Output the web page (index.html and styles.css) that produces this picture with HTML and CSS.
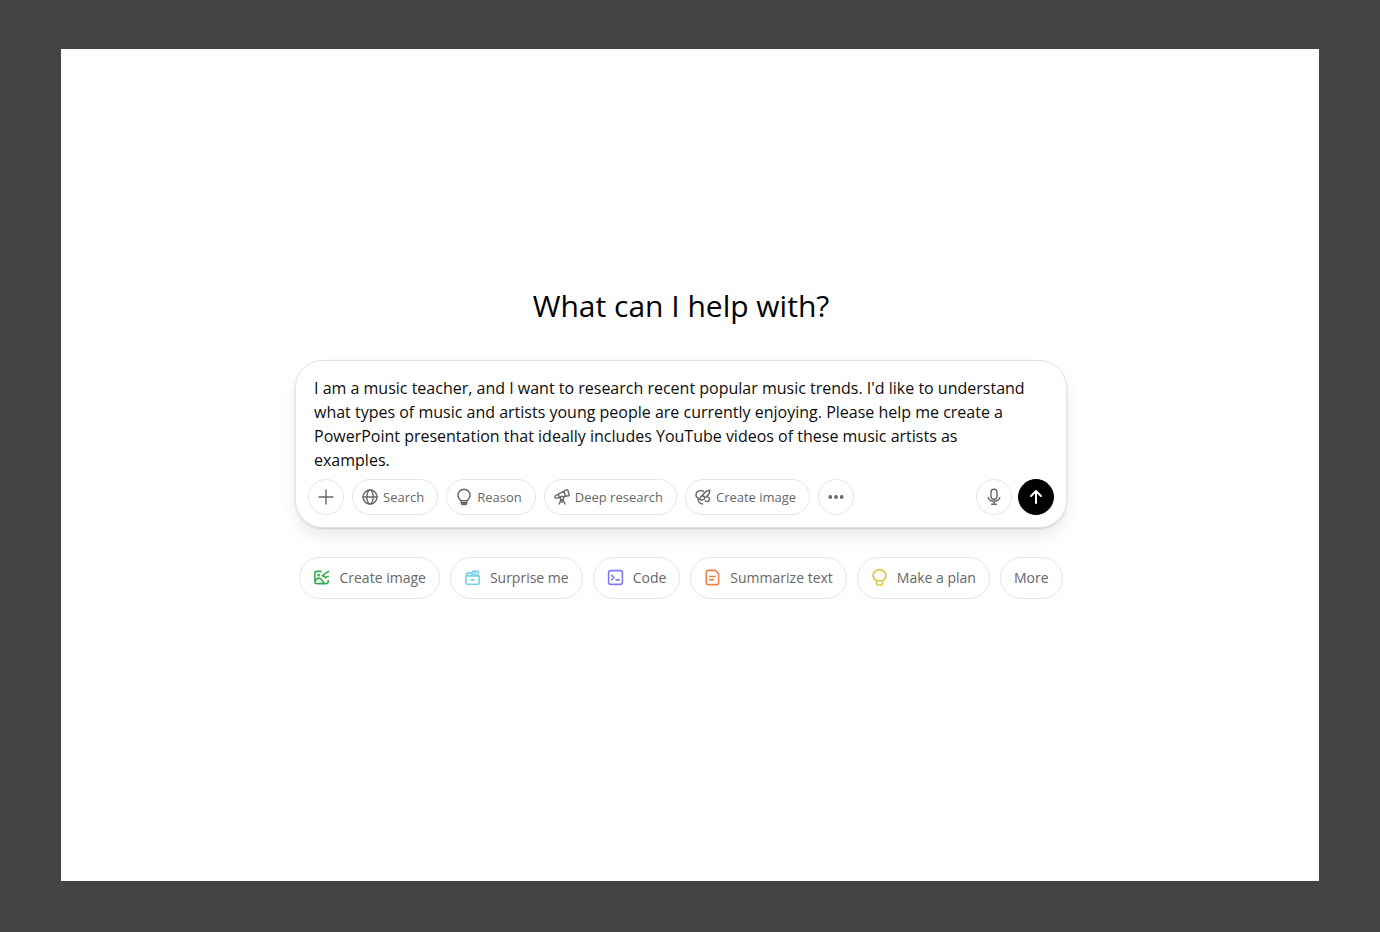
FILE: index.html
```html
<!DOCTYPE html>
<html lang="en">
<head>
<meta charset="utf-8">
<meta name="viewport" content="width=device-width, initial-scale=1">
<title>What can I help with?</title>
<link rel="stylesheet" href="styles.css">
</head>
<body>
<main class="panel">
  <h1 class="title"><label for="prompt">What can I help with?</label></h1>
  <form class="composer">
    <textarea class="prompt" id="prompt" rows="4" spellcheck="false">I am a music teacher, and I want to research recent popular music trends. I'd like to understand what types of music and artists young people are currently enjoying. Please help me create a PowerPoint presentation that ideally includes YouTube videos of these music artists as examples.</textarea>
    <div class="toolbar">
      <button type="button" class="tool round" aria-label="Add"><svg class="icon" viewBox="0 0 18 18"><path d="M9 2v14M2 9h14"/></svg></button>
      <button type="button" class="tool"><svg class="icon" viewBox="0 0 18 18"><circle cx="9" cy="9" r="7"/><ellipse cx="9" cy="9" rx="3.200" ry="7"/><path d="M2 9h14"/></svg>Search</button>
      <button type="button" class="tool"><svg class="icon" viewBox="0 0 18 18"><path d="M6.200 12.600C4.200 11.400 3 9.600 3 7.300a6 6 0 0 1 12 0c0 2.300-1.200 4.100-3.200 5.300zM6.200 12.600V15A1.600 1.600 0 0 0 7.800 16.600h2.400a1.600 1.600 0 0 0 1.600-1.600v-2.400"/><path class="solid" d="M7 14.400h4v1.500H7z"/></svg>Reason</button>
      <button type="button" class="tool"><svg class="icon" viewBox="0 0 18 18"><path d="M11 3.200l2.700-1.300a.9.900 0 0 1 1.200.5l1.300 4.200a.9.900 0 0 1-.7 1.100l-3.100.6zM11 3.200L5.300 6.200M12.400 8.300l-1.700.6M5.300 6.200L2.200 8a.8.800 0 0 0-.3.900l.2.700a.8.800 0 0 0 .9.500l4.200-.6M5.300 6.200l.9 3.200"/><circle cx="9" cy="10" r="1.700"/><path d="M8 11.700L6.200 16M10 11.700l2 4.300M9 12v2.500"/></svg>Deep research</button>
      <button type="button" class="tool"><svg class="icon" viewBox="0 0 18 18"><path d="M9.500 3.400C6.300 1.400 2 3.200 2 7c0 1.500.8 2.600 2 2.800-.3 3.300 1.500 6.200 4.600 6.200"/><path d="M8.400 7.700C10 4.800 13.200 2.300 15.800 2.200c.1 3-2.300 6-5.200 7.800"/><path d="M8.200 7.700c-2.400.2-1.600 2.500-2.900 3.500 2 1.200 5.500 1 5.300-1.200a2.400 2.400 0 0 0-2.400-2.300z"/><path d="M13.600 8.800c1.800.7 2.400 2.300 1.600 3.600-.9 1.500-2.900 1.400-4 .6"/></svg>Create image</button>
      <button type="button" class="tool round dots-button" aria-label="More tools"><svg class="icon" viewBox="0 0 18 18"><g class="dots"><circle cx="3.300" cy="9" r="1.900"/><circle cx="9" cy="9" r="1.900"/><circle cx="14.700" cy="9" r="1.900"/></g></svg></button>
      <span class="spacer"></span>
      <button type="button" class="tool round mic" aria-label="Dictate"><svg class="icon" viewBox="0 0 18 18"><rect x="6" y="1.300" width="6" height="10" rx="3"/><path d="M3.200 9.500a6 5 0 0 0 11.600 0M9 13.500V16.300M6.700 16.300h4.600"/></svg></button>
      <button type="submit" class="tool round send" aria-label="Send"><svg class="icon" viewBox="0 0 18 18"><path d="M9 15V3.500M4 8l5-5 5 5"/></svg></button>
    </div>
  </form>
  <div class="suggestions">
    <button type="button" class="chip"><svg class="icon green" viewBox="0 0 18 18"><path d="M8.500 2.500H3.700A1.700 1.700 0 0 0 2 4.200v9.600a1.700 1.700 0 0 0 1.700 1.700h10.600a1.700 1.700 0 0 0 1.700-1.700v-1.500M2.200 13c2.300-4 4.800-4.300 7-1.500l2.600 3.500"/><circle cx="6" cy="6.500" r=".6"/><path d="M16.300 2.500c-.8 2-3.300.8-4 2.700-.4 1.300-1.300 1.800-2.600 1.900 1.700.2 2.700 1.200 3.500 2.300.5-1.500 1.700-1.400 3-1.400"/></svg>Create image</button>
    <button type="button" class="chip"><svg class="icon cyan" viewBox="0 0 18 18"><path d="M2 7.300h14v7a1.900 1.900 0 0 1-1.900 1.900H3.900A1.900 1.900 0 0 1 2 14.300zM7.500 11.500h3M3.600 7L3 4.300l2.600.2C6.300 3 8 3.700 8.500 6.800M9.600 6.800C8.500 4 9 1.800 10.400 1.800s1.600 1.800 1.100 5M12 3.200c1-1.500 3-1.200 3.200.2s-.6 2.400-1.500 3.600"/></svg>Surprise me</button>
    <button type="button" class="chip"><svg class="icon violet" viewBox="0 0 18 18"><rect x="1.700" y="1.700" width="14.600" height="14.600" rx="2"/><path d="M5 6.800L7.300 9 5 11.200M9.500 11.500H13"/></svg>Code</button>
    <button type="button" class="chip"><svg class="icon orange" viewBox="0 0 18 18"><path d="M4.300 1.500h7.500l3.700 3.600v9.500a1.900 1.900 0 0 1-1.900 1.900H4.300a1.900 1.900 0 0 1-1.900-1.900V3.400a1.900 1.900 0 0 1 1.900-1.900zM6 8h6M6 11.500h4"/></svg>Summarize text</button>
    <button type="button" class="chip"><svg class="icon yellow" viewBox="0 0 18 18"><path d="M5.800 12.500C3.500 11.300 2.200 9.400 2.200 7a6.800 6.300 0 0 1 13.600 0c0 2.400-1.300 4.300-3.600 5.500zM5.800 12.500v2.800A1.800 1.800 0 0 0 7.600 17h2.800a1.800 1.800 0 0 0 1.800-1.700v-2.800"/></svg>Make a plan</button>
    <button type="button" class="chip">More</button>
  </div>
</main>
</body>
</html>
```
FILE: styles.css
```css
* { box-sizing: border-box; }
body {
  margin: 0;
  min-height: 100vh;
  padding: 49px 61px 51px;
  display: flex;
  background: #444;
  font-family: "Open Sans", "Noto Sans", sans-serif;
}
button, textarea { font-family: inherit; }
.panel {
  flex: 1;
  min-width: 0;
  display: flex;
  flex-direction: column;
  align-items: center;
  justify-content: center;
  padding: 0 18px 49px 0;
  background: #fff;
}
.title {
  margin: 0 0 31px;
  font-size: 30px;
  line-height: 46px;
  font-weight: 400;
  color: #000;
}
.composer {
  width: 100%;
  max-width: 772px;
  padding: 15px 12px 12px;
  border: 1px solid #e3e3e3;
  border-radius: 28px;
  box-shadow: 0 9px 16px rgba(0, 0, 0, .08), 0 1px 2px rgba(0, 0, 0, .15);
}
.prompt {
  display: block;
  width: 100%;
  padding: 0 20px 0 6px;
  border: 0;
  outline: 0;
  resize: none;
  overflow: hidden;
  background: none;
  font-size: 16px;
  line-height: 24px;
  color: #0d0d0d;
}
.toolbar {
  display: flex;
  flex-wrap: wrap;
  gap: 8px;
  margin-top: 7px;
}
.tool, .chip {
  display: flex;
  align-items: center;
  border: 1px solid #e6e6e6;
  border-radius: 21px;
  background: #fff;
  color: #676767;
  white-space: nowrap;
}
.tool {
  gap: 4px;
  height: 36px;
  padding: 0 13px 0 8px;
  font-size: 13px;
}
.round {
  width: 36px;
  padding: 0;
  justify-content: center;
}
.spacer { flex: 1; }
.mic { margin-right: -2px; }
.send {
  background: #000;
  border-color: #000;
  color: #fff;
}
.icon {
  width: 18px;
  height: 18px;
  flex: none;
  fill: none;
  stroke: currentColor;
  stroke-width: 1.4;
  stroke-linecap: round;
  stroke-linejoin: round;
}
.send .icon { stroke-width: 2; }
.solid { fill: currentColor; }
.dots { fill: currentColor; stroke: none; }
.suggestions {
  display: flex;
  flex-wrap: wrap;
  justify-content: center;
  gap: 10px;
  margin-top: 29px;
}
.chip {
  gap: 9px;
  height: 42px;
  padding: 0 13px;
  font-size: 14px;
}
.chip .icon {
  width: 17px;
  height: 17px;
  stroke-width: 1.7;
}
.green { color: #35ae47; }
.cyan { color: #76d0eb; }
.violet { color: #7d7cf5; }
.orange { color: #ea8444; }
.yellow { color: #e2c541; }
```
